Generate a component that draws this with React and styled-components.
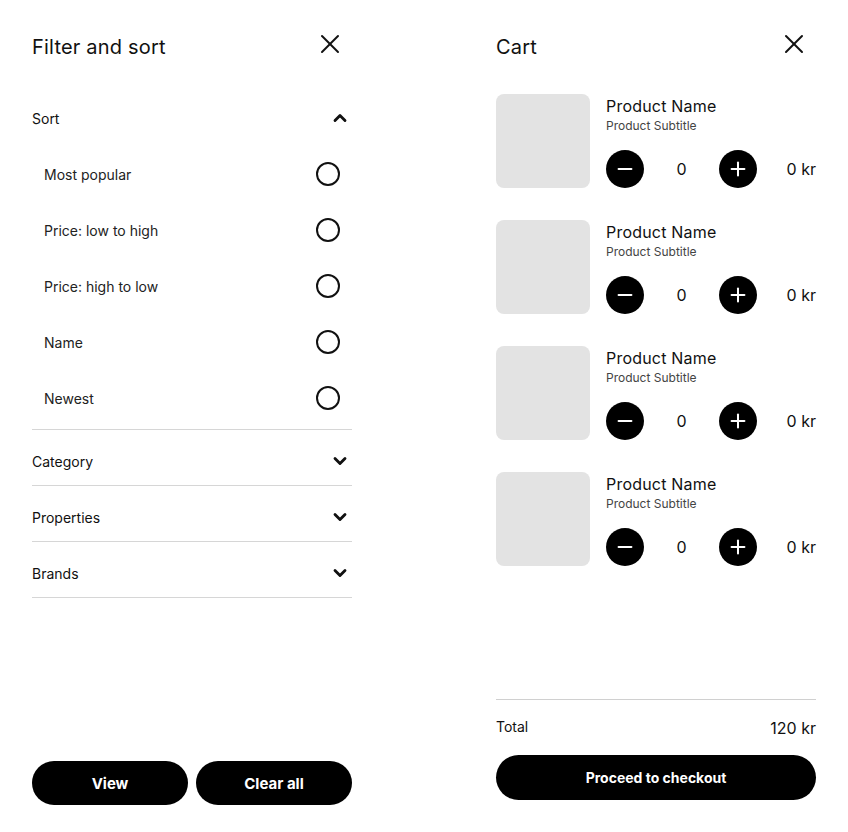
import styled, { createGlobalStyle } from "styled-components";
import { X, ChevronUp, ChevronDown, Minus, Plus } from "lucide-react";

const GlobalStyle = createGlobalStyle`
  body {
    margin: 0;
    background: #ffffff;
    font-family: "Inter", "Noto Sans", sans-serif;
    color: #111111;
  }
  button {
    font-family: inherit;
  }
`;

const Page = styled.div`
  display: flex;
  justify-content: space-between;
  width: 848px;
  height: 832px;
  padding: 0 32px;
  box-sizing: border-box;
`;

const Panel = styled.section`
  display: flex;
  flex-direction: column;
  width: 320px;
  height: 100%;
  padding-top: 30px;
  padding-bottom: ${(p) => p.$bottom}px;
  box-sizing: border-box;
`;

const Header = styled.div`
  display: flex;
  align-items: center;
  justify-content: space-between;
  height: 34px;
`;

const Title = styled.h2`
  margin: 0;
  font-size: 20px;
  font-weight: 400;
  letter-spacing: 0.2px;
`;

const CloseButton = styled.button`
  display: flex;
  align-items: center;
  justify-content: center;
  width: 32px;
  height: 32px;
  margin-top: -6px;
  margin-right: 6px;
  padding: 0;
  border: none;
  background: none;
  color: #111111;
`;

const Accordion = styled.div`
  display: flex;
  flex-direction: column;
  margin-top: 26px;
`;

const Section = styled.div`
  border-bottom: 1px solid #d6d6d6;
  padding-bottom: ${(p) => (p.$open ? 3 : 0)}px;
`;

const SectionHead = styled.div`
  display: flex;
  align-items: center;
  justify-content: space-between;
  height: ${(p) => (p.$open ? 56 : 55)}px;
  padding-top: ${(p) => (p.$open ? 0 : 7)}px;
  padding-right: 2px;
  box-sizing: border-box;
  font-size: 14px;
`;

const Option = styled.div`
  display: flex;
  align-items: center;
  justify-content: space-between;
  height: 56px;
  padding: 0 12px;
  font-size: 14px;
  color: #222222;
`;

const Radio = styled.span`
  width: 20px;
  height: 20px;
  border: 2px solid #111111;
  border-radius: 50%;
`;

const Actions = styled.div`
  display: flex;
  gap: 8px;
  margin-top: auto;
`;

const PillButton = styled.button`
  flex: ${(p) => (p.$grow ? "1 1 0" : "none")};
  height: ${(p) => p.$height}px;
  border: none;
  border-radius: 999px;
  background: #000000;
  color: #ffffff;
  font-size: ${(p) => p.$size}px;
  font-weight: 700;
`;

const Items = styled.div`
  display: flex;
  flex-direction: column;
  gap: 32px;
  margin-top: 30px;
`;

const Item = styled.div`
  display: flex;
  gap: 16px;
`;

const Thumb = styled.div`
  width: 94px;
  height: 94px;
  border-radius: 8px;
  background: #e3e3e3;
  flex-shrink: 0;
`;

const Info = styled.div`
  display: flex;
  flex-direction: column;
  flex: 1;
`;

const Name = styled.div`
  font-size: 16px;
  line-height: 24px;
  letter-spacing: 0.2px;
`;

const Subtitle = styled.div`
  font-size: 12px;
  line-height: 16px;
  color: #444444;
`;

const Controls = styled.div`
  display: flex;
  align-items: center;
  margin-top: auto;
`;

const RoundButton = styled.button`
  display: flex;
  align-items: center;
  justify-content: center;
  width: 38px;
  height: 38px;
  padding: 0;
  border: none;
  border-radius: 50%;
  background: #000000;
  color: #ffffff;
`;

const Count = styled.span`
  width: 75px;
  text-align: center;
  font-size: 16px;
`;

const Price = styled.span`
  margin-left: auto;
  font-size: 16px;
`;

const Footer = styled.div`
  display: flex;
  flex-direction: column;
  margin-top: auto;
  border-top: 1px solid #d0d0d0;
  padding-top: 16px;
  gap: 17px;
`;

const TotalRow = styled.div`
  display: flex;
  justify-content: space-between;
  align-items: flex-end;
  height: 22px;
`;

const TotalLabel = styled.span`
  font-size: 14px;
  margin-bottom: 3px;
`;

const TotalValue = styled.span`
  font-size: 16px;
`;

const sortOptions = [
  "Most popular",
  "Price: low to high",
  "Price: high to low",
  "Name",
  "Newest",
];

const filters = ["Category", "Properties", "Brands"];

const products = [1, 2, 3, 4];

const App = () => {
  return (
    <>
      <GlobalStyle />
      <Page>
        <Panel $bottom={27}>
          <Header>
            <Title>Filter and sort</Title>
            <CloseButton aria-label="Close">
              <X size={32} strokeWidth={1.5} />
            </CloseButton>
          </Header>
          <Accordion>
            <Section $open>
              <SectionHead $open>
                Sort
                <ChevronUp size={20} strokeWidth={3.4} />
              </SectionHead>
              {sortOptions.map((o) => (
                <Option key={o}>
                  {o}
                  <Radio />
                </Option>
              ))}
            </Section>
            {filters.map((f) => (
              <Section key={f}>
                <SectionHead>
                  {f}
                  <ChevronDown size={20} strokeWidth={3.4} />
                </SectionHead>
              </Section>
            ))}
          </Accordion>
          <Actions>
            <PillButton $grow $height={44} $size={15}>View</PillButton>
            <PillButton $grow $height={44} $size={15}>Clear all</PillButton>
          </Actions>
        </Panel>

        <Panel $bottom={32}>
          <Header>
            <Title>Cart</Title>
            <CloseButton aria-label="Close cart">
              <X size={32} strokeWidth={1.5} />
            </CloseButton>
          </Header>
          <Items>
            {products.map((p) => (
              <Item key={p}>
                <Thumb />
                <Info>
                  <Name>Product Name</Name>
                  <Subtitle>Product Subtitle</Subtitle>
                  <Controls>
                    <RoundButton aria-label="Decrease">
                      <Minus size={22} strokeWidth={2.2} />
                    </RoundButton>
                    <Count>0</Count>
                    <RoundButton aria-label="Increase">
                      <Plus size={22} strokeWidth={2.2} />
                    </RoundButton>
                    <Price>0 kr</Price>
                  </Controls>
                </Info>
              </Item>
            ))}
          </Items>
          <Footer>
            <TotalRow>
              <TotalLabel>Total</TotalLabel>
              <TotalValue>120 kr</TotalValue>
            </TotalRow>
            <PillButton $height={45} $size={14}>Proceed to checkout</PillButton>
          </Footer>
        </Panel>
      </Page>
    </>
  );
};

export default App;
